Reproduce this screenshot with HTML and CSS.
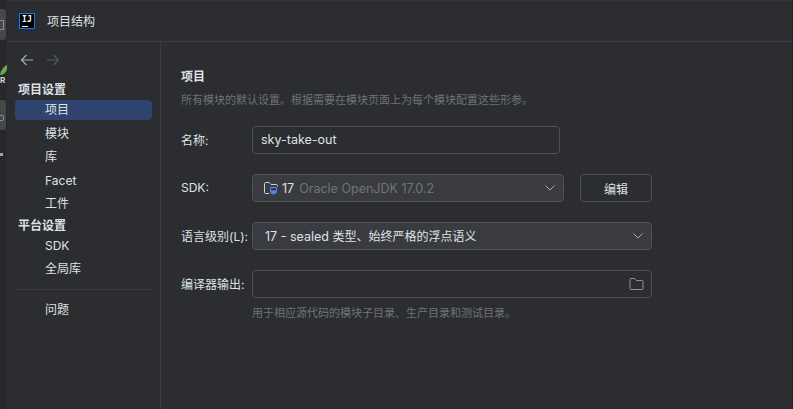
FILE: index.html
```html
<!DOCTYPE html>
<html lang="zh-CN">
<head>
    <meta charset="UTF-8">
    <title>项目结构</title>
    <link rel="stylesheet" href="styles.css">
</head>
<body>
    <div class="ide-strip">
        <div class="strip-tile"><div class="strip-glyph"></div></div>
        <div class="strip-run">
            <svg class="strip-leaf" width="7" height="10" viewBox="0 0 7 10"><path d="M0 10 C1 5 3 2 7 0 L7 4 C6 8 3 10 0 10 Z" fill="#6aa84f"/></svg>
            <div class="strip-letter">R</div>
        </div>
        <div class="strip-tile tall"><div class="strip-glyph small"></div></div>
        <div class="strip-dot"></div>
    </div>

    <div class="dialog">
        <div class="titlebar">
            <div class="app-logo">
                <span class="logo-text">IJ</span>
                <span class="logo-bar"></span>
            </div>
            <span class="title">项目结构</span>
        </div>

        <div class="body">
            <div class="sidebar">
                <div class="nav-arrows">
                    <svg width="14" height="12" viewBox="0 0 14 12"><path d="M13 6H1.5M6.5 1L1.5 6L6.5 11" fill="none" stroke="#a8adb5" stroke-width="1.2"/></svg>
                    <svg width="14" height="12" viewBox="0 0 14 12"><path d="M1 6H12.5M7.5 1L12.5 6L7.5 11" fill="none" stroke="#55585e" stroke-width="1.2"/></svg>
                </div>
                <div class="group-title first">项目设置</div>
                <div class="nav-item selected">项目</div>
                <div class="nav-item">模块</div>
                <div class="nav-item">库</div>
                <div class="nav-item">Facet</div>
                <div class="nav-item">工件</div>
                <div class="group-title">平台设置</div>
                <div class="nav-item">SDK</div>
                <div class="nav-item">全局库</div>
                <div class="nav-divider"></div>
                <div class="nav-item">问题</div>
            </div>

            <div class="content">
                <h2 class="page-title">项目</h2>
                <p class="page-desc">所有模块的默认设置。根据需要在模块页面上为每个模块配置这些形参。</p>

                <div class="form">
                    <label class="field-label">名称:</label>
                    <div class="input name-input"><span class="latin">sky-take-out</span></div>

                    <label class="field-label">SDK:</label>
                    <div class="sdk-row">
                        <div class="select sdk-select">
                            <svg class="sdk-icon" width="16" height="16" viewBox="0 0 16 16">
                                <path d="M6 13.5H2.5A1 1 0 0 1 1.5 12.5V3.5A1 1 0 0 1 2.5 2.5H6L8 4.5H13.5A1 1 0 0 1 14.5 5.5V6.5" fill="none" stroke="#ced0d6"/>
                                <path d="M7.5 7.5H13.5V11.5A2.5 2.5 0 0 1 11 14H10A2.5 2.5 0 0 1 7.5 11.5Z" fill="none" stroke="#548af7"/>
                                <path d="M8 10.5H13V11.5A2 2 0 0 1 11 13.5H10A2 2 0 0 1 8 11.5Z" fill="#548af7"/>
                            </svg>
                            <span class="sdk-version">17</span>
                            <span class="sdk-name">Oracle OpenJDK 17.0.2</span>
                            <svg class="chevron" width="12" height="8" viewBox="0 0 12 8"><path d="M1.5 1.5L6 6L10.5 1.5" fill="none" stroke="#a8adb5"/></svg>
                        </div>
                        <button class="btn">编辑</button>
                    </div>

                    <label class="field-label">语言级别(L):</label>
                    <div class="select wide">
                        <span class="lang-text"><span class="latin">17 - sealed </span>类型、始终严格的浮点语义</span>
                        <svg class="chevron" width="12" height="8" viewBox="0 0 12 8"><path d="M1.5 1.5L6 6L10.5 1.5" fill="none" stroke="#a8adb5"/></svg>
                    </div>

                    <label class="field-label">编译器输出:</label>
                    <div class="input wide path-input">
                        <svg width="15" height="14" viewBox="0 0 15 14"><path d="M1 2.5A1 1 0 0 1 2 1.5H5.5L7.5 3.5H13A1 1 0 0 1 14 4.5V11.5A1 1 0 0 1 13 12.5H2A1 1 0 0 1 1 11.5Z" fill="none" stroke="#8f9297"/></svg>
                    </div>
                </div>
                <p class="field-hint">用于相应源代码的模块子目录、生产目录和测试目录。</p>
            </div>
        </div>
    </div>
</body>
</html>
```

FILE: styles.css
```css
* {
    box-sizing: border-box;
}

html, body {
    height: 100%;
}

body {
    margin: 0;
    display: flex;
    overflow: hidden;
    background-color: #2b2d30;
    color: #dfe1e5;
    font-family: Inter, "Noto Sans CJK SC", sans-serif;
    font-size: 12px;
}

.latin {
    font-size: 12.5px;
}

.ide-strip {
    width: 7px;
    flex-shrink: 0;
    overflow: hidden;
    background-color: #26282b;
    padding-top: 9px;
}

.strip-tile {
    width: 6px;
    height: 31px;
    padding-top: 11px;
    background-color: #45474b;
    border-radius: 0 3px 3px 0;
}

.strip-tile.tall {
    height: 30px;
    padding-top: 15px;
    margin-top: 14px;
}

.strip-glyph {
    width: 4px;
    height: 10px;
    border: 1px solid #8d8f93;
    border-left: none;
}

.strip-glyph.small {
    height: 6px;
    border-radius: 0 2px 2px 0;
}

.strip-run {
    margin-top: 25px;
    height: 21px;
}

.strip-leaf {
    display: block;
}

.strip-letter {
    font-size: 8px;
    font-weight: 700;
    line-height: 11px;
    color: #d5d5d5;
}

.strip-dot {
    width: 3px;
    height: 3px;
    margin-top: 23px;
    background-color: #a5a5a5;
}

.dialog {
    flex: 1;
    display: flex;
    flex-direction: column;
    border-top: 1px solid #3a3332;
    border-right: 1px solid #1f2022;
}

.titlebar {
    height: 41px;
    flex-shrink: 0;
    display: flex;
    align-items: center;
    padding: 0 0 1px 12px;
    border-bottom: 1px solid #3c3e43;
}

.app-logo {
    width: 16px;
    height: 16px;
    flex-shrink: 0;
    display: flex;
    flex-direction: column;
    padding: 1px 0 0 2px;
    background-color: #000;
    border: 1px solid #087cfa;
}

.logo-text {
    height: 9px;
    font-family: "DejaVu Sans Mono", monospace;
    font-size: 8px;
    font-weight: 700;
    line-height: 9px;
    letter-spacing: 0.3px;
    color: #fff;
}

.logo-bar {
    width: 6px;
    height: 1px;
    margin-top: 2px;
    background-color: #fff;
}

.title {
    margin-left: 12px;
}

.body {
    flex: 1;
    display: flex;
}

.sidebar {
    width: 154px;
    flex-shrink: 0;
    padding: 11px 8px 0 8px;
    border-right: 1px solid #393b40;
}

.nav-arrows {
    height: 14px;
    display: flex;
    align-items: center;
    gap: 12px;
    padding-left: 5px;
}

.group-title {
    height: 16px;
    margin-bottom: 2px;
    padding-left: 3px;
    font-weight: 700;
    line-height: 16px;
}

.group-title.first {
    margin-top: 15px;
}

.nav-item {
    height: 20px;
    margin-bottom: 3.5px;
    padding-left: 30px;
    line-height: 20px;
    border-radius: 4px;
}

.nav-item.selected {
    background-color: #2e436e;
}

.nav-divider {
    height: 1px;
    margin: 10px 0 10px;
    background-color: #393b40;
}

.content {
    flex: 1;
    padding: 26px 0 0 20px;
}

.page-title {
    margin: 0;
    font-size: 12px;
    font-weight: 700;
    line-height: 18px;
}

.page-desc {
    margin: 5px 0 0;
    font-size: 11px;
    line-height: 18px;
    color: #6f737a;
}

.form {
    display: grid;
    grid-template-columns: 71px 400px;
    row-gap: 20px;
    align-items: center;
    margin-top: 17px;
}

.field-label {
    padding-bottom: 2px;
    white-space: nowrap;
}

.input,
.select,
.btn {
    height: 28px;
    border: 1px solid #4e5157;
    border-radius: 4px;
}

.input {
    display: flex;
    align-items: center;
    padding: 0 12px 0 8px;
}

.name-input {
    width: 308px;
    padding-bottom: 2px;
}

.wide {
    width: 400px;
}

.path-input {
    justify-content: flex-end;
    padding-right: 7px;
}

.select {
    display: flex;
    align-items: center;
    justify-content: space-between;
    padding: 0 7px 0 12px;
    background-color: #393b40;
}

.lang-text {
    padding-bottom: 2px;
}

.sdk-row {
    display: flex;
    gap: 16px;
}

.sdk-select {
    width: 312px;
    justify-content: flex-start;
    padding-left: 10px;
    font-size: 12.5px;
}

.sdk-icon {
    flex-shrink: 0;
}

.sdk-version {
    margin-left: 3px;
}

.sdk-name {
    margin-left: 5px;
    color: #6f737a;
}

.sdk-select .chevron {
    margin-left: auto;
}

.btn {
    width: 72px;
    padding: 0;
    background-color: transparent;
    color: #dfe1e5;
    font-family: inherit;
    font-size: 12px;
}

.field-hint {
    margin: 6px 0 0 71px;
    font-size: 11px;
    line-height: 18px;
    color: #6f737a;
}
```
